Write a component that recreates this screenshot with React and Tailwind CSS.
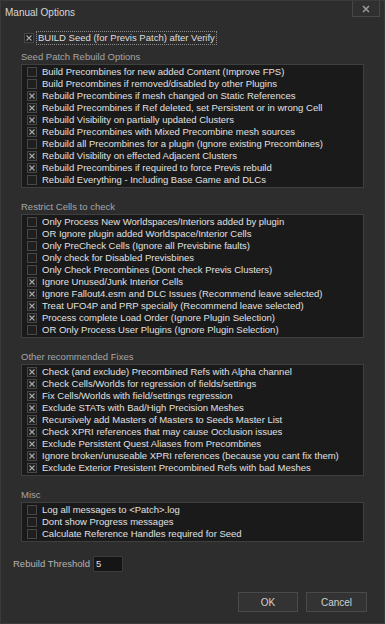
import React from "react";

const seedOptions = [
  { label: "Build Precombines for new added Content (Improve FPS)", on: false },
  { label: "Build Precombines if removed/disabled by other Plugins", on: false },
  { label: "Rebuild Precombines if mesh changed on Static References", on: true },
  { label: "Rebuild Precombines if Ref deleted, set Persistent or in wrong Cell", on: true },
  { label: "Rebuild Visibility on partially updated Clusters", on: true },
  { label: "Rebuild Precombines with Mixed Precombine mesh sources", on: true },
  { label: "Rebuild all Precombines for a plugin (Ignore existing Precombines)", on: false },
  { label: "Rebuild Visibility on effected Adjacent Clusters", on: true },
  { label: "Rebuild Precombines if required to force Previs rebuild", on: true },
  { label: "Rebuild Everything - Including Base Game and DLCs", on: false },
];

const restrictOptions = [
  { label: "Only Process New Worldspaces/Interiors added by plugin", on: false },
  { label: "OR Ignore plugin added Worldspace/Interior Cells", on: false },
  { label: "Only PreCheck Cells (Ignore all Previsbine faults)", on: false },
  { label: "Only check for Disabled Previsbines", on: false },
  { label: "Only Check Precombines (Dont check Previs Clusters)", on: false },
  { label: "Ignore Unused/Junk Interior Cells", on: true },
  { label: "Ignore Fallout4.esm and DLC Issues (Recommend leave selected)", on: true },
  { label: "Treat UFO4P and PRP specially (Recommend leave selected)", on: true },
  { label: "Process complete Load Order (Ignore Plugin Selection)", on: true },
  { label: "OR Only Process User Plugins (Ignore Plugin Selection)", on: false },
];

const fixOptions = [
  "Check (and exclude) Precombined Refs with Alpha channel",
  "Check Cells/Worlds for regression of fields/settings",
  "Fix Cells/Worlds with field/settings regression",
  "Exclude STATs with Bad/High Precision Meshes",
  "Recursively add Masters of Masters to Seeds Master List",
  "Check XPRI references that may cause Occlusion issues",
  "Exclude Persistent Quest Aliases from Precombines",
  "Ignore broken/unuseable XPRI references (because you cant fix them)",
  "Exclude Exterior Presistent Precombined Refs with bad Meshes",
].map((label) => ({ label, on: true }));

const miscOptions = [
  { label: "Log all messages to <Patch>.log", on: false },
  { label: "Dont show Progress messages", on: false },
  { label: "Calculate Reference Handles required for Seed", on: false },
];

const Check = ({ on }) => (
  <span className="flex h-[10px] w-[10px] shrink-0 items-center justify-center border border-[#474747] bg-[#1f1f1f]">
    {on && (
      <svg width="6" height="6" viewBox="0 0 6 6">
        <path d="M0.5 0.5L5.5 5.5M5.5 0.5L0.5 5.5" stroke="#a9a9a9" strokeWidth="1.1" />
      </svg>
    )}
  </span>
);

const Group = ({ title, items }) => (
  <div className="flex flex-col">
    <div className="h-[14px] leading-[14px] text-[#a6a6a6]">{title}</div>
    <div className="flex flex-col border border-[#3f3f3f] bg-[#1a1a1b] py-px">
      {items.map((item, i) => (
        <div key={i} className="flex h-[12px] items-center gap-[5px] pl-[5px] text-[#e0e0e0]">
          <Check on={item.on} />
          <span className="whitespace-nowrap">{item.label}</span>
        </div>
      ))}
    </div>
  </div>
);

export default function App() {
  return (
    <div
      className="flex h-[624px] w-[385px] flex-col border border-[#3a3a3a] bg-[#2d2d2d] text-[9.5px] text-[#dedede]"
      style={{ fontFamily: '"Liberation Sans", Arial, sans-serif' }}
    >
      <div className="flex h-[22px] items-start justify-between">
        <span className="pl-[4px] pt-[4px] text-[10px] text-[#d8d8d8]">Manual Options</span>
        <div className="mr-[4px] flex h-[16px] w-[28px] items-center justify-center border border-t-0 border-[#474747] bg-[#303030]">
          <svg width="8" height="8" viewBox="0 0 8 8">
            <path d="M1 1L7 7M7 1L1 7" stroke="#9a9a9a" strokeWidth="1.5" />
          </svg>
        </div>
      </div>

      <div className="flex flex-col px-[20px]">
        <div className="mt-[8px] flex h-[14px] items-center gap-[2px] pl-[3px]">
          <Check on />
          <span className="border border-dotted border-[#8a8a8a] px-px leading-[12px]">
            BUILD Seed (for Previs Patch) after Verify
          </span>
        </div>

        <div className="mt-[5px] flex flex-col gap-[12px]">
          <Group title="Seed Patch Rebuild Options" items={seedOptions} />
          <Group title="Restrict Cells to check" items={restrictOptions} />
          <Group title="Other recommended Fixes" items={fixOptions} />
          <Group title="Misc" items={miscOptions} />
        </div>
      </div>

      <div className="mt-[14px] flex items-center gap-[3px] pl-[12px]">
        <span className="text-[#b4b4b4]">Rebuild Threshold</span>
        <div className="flex h-[16px] w-[30px] items-center border border-[#3a3a3a] bg-[#151515] pl-[2px] text-[#e0e0e0]">
          5
        </div>
      </div>

      <div className="mt-[20px] flex justify-end gap-[8px] pr-[17px]">
        <button className="h-[20px] w-[60px] border border-[#4a4a4a] bg-[#333333] text-[10px] text-[#d0d0d0]">
          OK
        </button>
        <button className="h-[20px] w-[61px] border border-[#4a4a4a] bg-[#333333] text-[10px] text-[#d0d0d0]">
          Cancel
        </button>
      </div>
    </div>
  );
}
